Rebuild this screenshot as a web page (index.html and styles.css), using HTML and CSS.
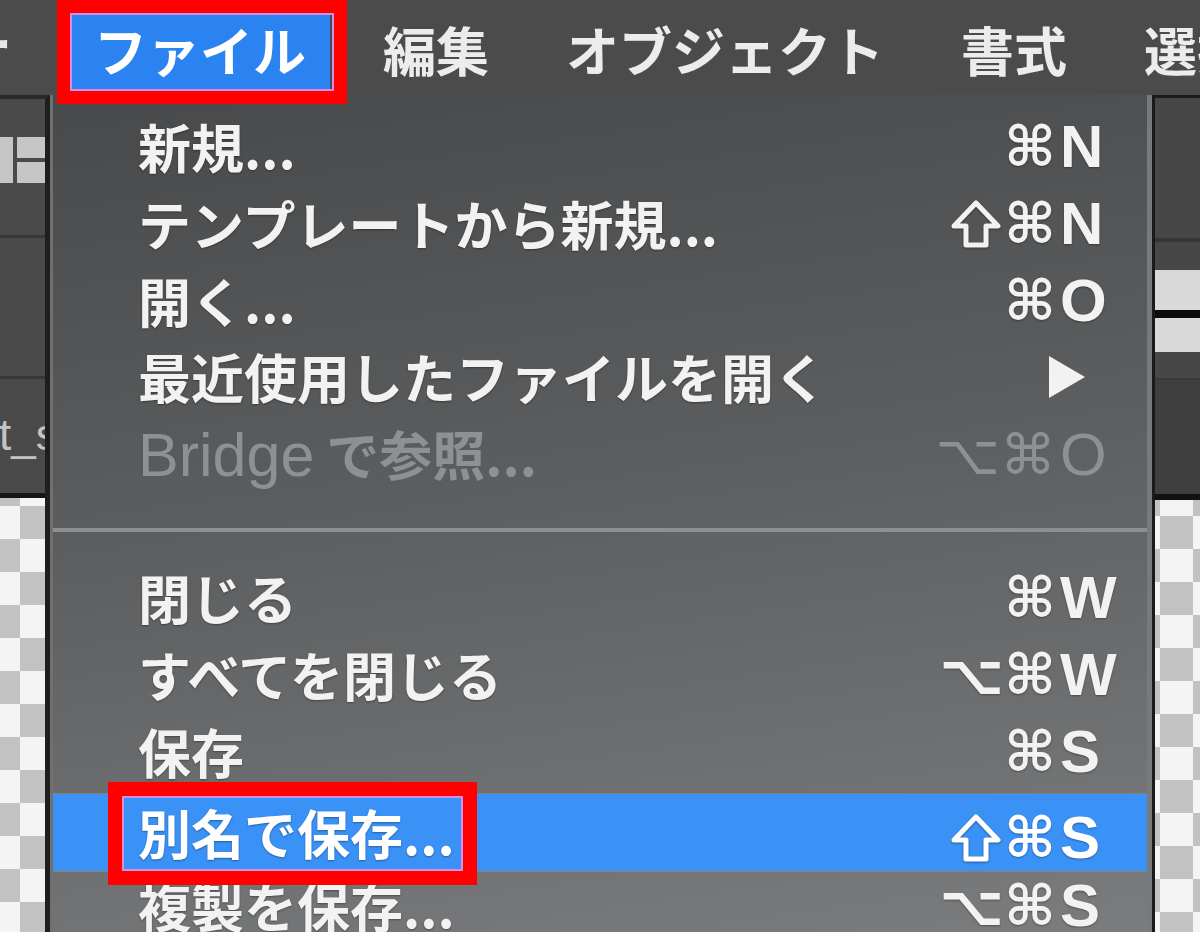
FILE: index.html
```html
<!DOCTYPE html>
<html lang="ja">
<head>
  <meta charset="UTF-8" />
  <title>ファイル メニュー</title>
  <link rel="stylesheet" href="styles.css">
</head>
<body>
  <div class="screen">
    <header class="menubar">
      <span class="stub">ー</span>
      <span class="top-item active marked">ファイル</span>
      <span class="top-item">編集</span>
      <span class="top-item">オブジェクト</span>
      <span class="top-item">書式</span>
      <span class="top-item">選択</span>
    </header>

    <div class="workspace">
      <aside class="panel panel-left">
        <div class="panel-top">
          <div class="icon-row">
            <span class="blk blk-tall"></span>
            <span class="blk-stack"><span class="blk"></span><span class="blk"></span></span>
          </div>
        </div>
        <div class="panel-mid"></div>
        <div class="panel-name">t_s</div>
        <div class="checker checker-left"></div>
      </aside>

      <div class="dropdown">
        <ul class="menu">
          <li class="row"><span class="label">新規...</span><span class="mods">⌘</span><span class="key">N</span></li>
          <li class="row"><span class="label">テンプレートから新規...</span>
            <span class="mods"><svg class="shift" width="52" height="50" viewBox="0 0 52 50"><path d="M26 4 L48 27 L36 27 L36 46 L16 46 L16 27 L4 27 Z" fill="none" stroke="currentColor" stroke-width="5" stroke-linejoin="round"/></svg>⌘</span><span class="key">N</span></li>
          <li class="row"><span class="label">開く...</span><span class="mods">⌘</span><span class="key">O</span></li>
          <li class="row"><span class="label">最近使用したファイルを開く</span><span class="mods"></span>
            <span class="key"><svg class="submenu" width="40" height="44" viewBox="0 0 40 44"><polygon points="2,1 38,22 2,43" fill="#f2f2f2"/></svg></span></li>
          <li class="row disabled"><span class="label"><span class="latin">Bridge</span> で参照...</span><span class="mods">⌥⌘</span><span class="key">O</span></li>
        </ul>
        <div class="separator"></div>
        <ul class="menu">
          <li class="row"><span class="label">閉じる</span><span class="mods">⌘</span><span class="key">W</span></li>
          <li class="row"><span class="label">すべてを閉じる</span><span class="mods">⌥⌘</span><span class="key">W</span></li>
          <li class="row"><span class="label">保存</span><span class="mods">⌘</span><span class="key">S</span></li>
          <li class="row selected"><span class="label marked">別名で保存...</span>
            <span class="mods"><svg class="shift" width="52" height="50" viewBox="0 0 52 50"><path d="M26 4 L48 27 L36 27 L36 46 L16 46 L16 27 L4 27 Z" fill="none" stroke="currentColor" stroke-width="5" stroke-linejoin="round"/></svg>⌘</span><span class="key">S</span></li>
          <li class="row"><span class="label">複製を保存...</span><span class="mods">⌥⌘</span><span class="key">S</span></li>
        </ul>
      </div>

      <aside class="panel panel-right">
        <div class="panel-top"></div>
        <div class="bar"></div>
        <div class="bar bar-second"></div>
        <div class="panel-gap"></div>
        <div class="panel-dark"></div>
        <div class="checker checker-right"></div>
      </aside>
    </div>
  </div>
</body>
</html>
```

FILE: styles.css
```css
body {
  margin: 0;
  background: #4a4a4a;
  font-family: "Noto Sans CJK JP", "Noto Sans", sans-serif;
  color: #f2f2f2;
}
.screen {
  width: 1200px;
  height: 932px;
  overflow: hidden;
}

/* top menu bar */
.menubar {
  height: 95px;
  box-sizing: border-box;
  padding-top: 12px;
  display: flex;
  align-items: flex-start;
  gap: 29px;
  background: #4b4b4b;
  font-size: 53px;
  font-weight: 700;
  white-space: nowrap;
  position: relative;
  z-index: 2;
}
.stub {
  width: 53px;
  flex: none;
  margin-left: -41px;
  margin-right: 29px;
  line-height: 60px;
  color: #e6e6e6;
}
.top-item {
  flex: none;
  height: 78px;
  line-height: 74px;
  padding: 0 24px;
  color: #ececec;
}
.top-item.active {
  background: #2b82f1;
  color: #fff;
}
.marked {
  position: relative;
}
.marked::after {
  content: "";
  position: absolute;
  border: 13px solid #ff0000;
  box-shadow: inset 0 0 0 2px #d58ee6;
  pointer-events: none;
}
.top-item.marked::after {
  top: -12px;
  left: -13px;
  right: -17px;
  bottom: -14px;
}

/* workspace below the bar */
.workspace {
  display: flex;
  height: 837px;
}
.panel {
  flex: none;
  display: flex;
  flex-direction: column;
  background: #4a4a4a;
}
.panel-left {
  width: 45px;
  border-right: 5px solid #1e1e1e;
  border-top: 4px solid #2a2a2a;
}
.panel-left .panel-top {
  height: 139px;
  border-bottom: 3px solid #383838;
  box-sizing: border-box;
  padding-top: 38px;
}
.icon-row {
  display: flex;
  gap: 4px;
}
.blk {
  display: block;
  background: #c6c6c6;
  height: 21px;
  width: 28px;
}
.blk-tall {
  width: 13px;
  height: 46px;
}
.blk-stack {
  display: flex;
  flex-direction: column;
  gap: 4px;
}
.panel-mid {
  height: 138px;
  border-bottom: 3px solid #383838;
}
.panel-name {
  height: 114px;
  border-bottom: 5px solid #161616;
  font-family: "Liberation Sans", sans-serif;
  font-size: 44px;
  line-height: 112px;
  color: #c4c4c4;
  margin-left: -1px;
  overflow: hidden;
  white-space: nowrap;
}
.checker {
  flex: 1;
  background-image: repeating-conic-gradient(#c2c2c2 0 25%, #f4f4f4 0 50%);
  background-size: 66px 66px;
}
.checker-left {
  background-position: -13px 8px;
}
.checker-right {
  background-position: 5px -17px;
}
.panel-right {
  width: 45px;
  border-left: 3px solid #1a1a1a;
  border-top: 3px solid #1c1c1c;
  background: #474747;
}
.panel-right .panel-top {
  height: 140px;
  border-bottom: 4px solid #363636;
}
.bar {
  height: 40px;
  margin-top: 28px;
  background: #d9d9d9;
  border-bottom: 8px solid #0c0c0c;
}
.bar-second {
  margin-top: 0;
  height: 34px;
  border-bottom: none;
}
.panel-gap {
  height: 26px;
  border-bottom: 2px solid #3a3a3a;
}
.panel-dark {
  height: 114px;
  background: #3f3f3f;
  border-bottom: 6px solid #111;
}

/* dropdown menu */
.dropdown {
  flex: none;
  width: 1094px;
  border-left: 3px solid #6e7071;
  border-right: 5px solid #77797a;
  padding-top: 17px;
  background: linear-gradient(172deg, #47494a 0%, #5b5d5e 45%, #7a7c7d 100%);
}
.menu {
  list-style: none;
  margin: 0;
  padding: 0;
}
.row {
  display: grid;
  grid-template-columns: 1fr auto 62px;
  align-items: center;
  box-sizing: border-box;
  height: 77px;
  padding: 0 25px 10px 85px;
  font-size: 53px;
  font-weight: 700;
  white-space: nowrap;
  text-shadow: 0 1px 2px rgba(0, 0, 0, 0.35);
}
.label {
  line-height: 67px;
}
.latin {
  font-family: "Liberation Sans", sans-serif;
  font-weight: 400;
  font-size: 61px;
}
.mods {
  display: flex;
  align-items: center;
  justify-content: flex-end;
  gap: 2px;
  font-family: "DejaVu Sans", sans-serif;
  font-size: 56px;
  font-weight: 700;
  padding-right: 4px;
}
.shift {
  filter: drop-shadow(0 1px 1px rgba(0, 0, 0, 0.35));
}
.key {
  font-family: "Liberation Sans", sans-serif;
  font-size: 60px;
  font-weight: 700;
  display: flex;
  align-items: center;
}
.submenu {
  margin-left: -13px;
}
.disabled {
  color: #8e9091;
  text-shadow: none;
}
.disabled .mods,
.disabled .key {
  font-weight: 400;
}
.separator {
  height: 66px;
  display: flex;
  align-items: center;
}
.separator::before {
  content: "";
  flex: 1;
  height: 4px;
  background: #8d8f90;
}
.selected {
  background: #3a91f6;
  color: #fff;
  box-shadow: 0 -1px 0 #8b7f6e, 0 1px 0 #8b7f6e;
}
.label.marked {
  display: inline-block;
  justify-self: start;
  margin: 10px 0 0 -16px;
  padding: 0 8px 0 16px;
  line-height: 77px;
}
.selected .label.marked {
  position: relative;
  top: -10px;
}
.label.marked::after {
  top: -12px;
  bottom: -14px;
  left: -14px;
  right: -14px;
  border-width: 14px;
}
```
